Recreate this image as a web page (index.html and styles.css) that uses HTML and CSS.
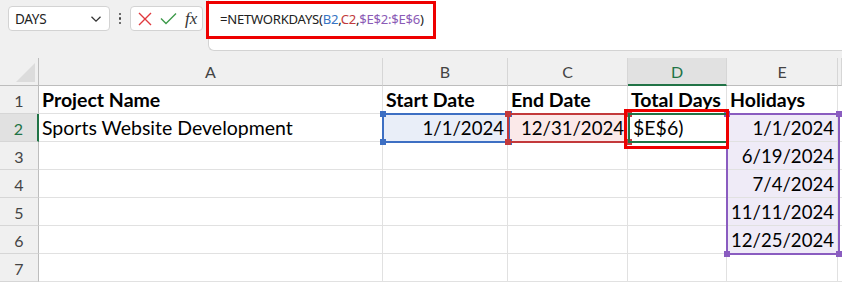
FILE: index.html
```html
<!DOCTYPE html>
<html>
<head>
<meta charset="utf-8">
<link rel="stylesheet" href="styles.css">
</head>
<body>
<div class="app">
  <div class="topbar">
    <div class="namebox">
      <span class="name">DAYS</span>
      <svg class="chev" width="12" height="8" viewBox="0 0 12 8"><path d="M1.5 1.8 L6 6.2 L10.5 1.8" fill="none" stroke="#333" stroke-width="1.3"/></svg>
    </div>
    <div class="dots"><i></i><i></i><i></i></div>
    <div class="btns">
      <svg width="14" height="14" viewBox="0 0 14 14"><path d="M1 1 L13 13 M13 1 L1 13" stroke="#e0393e" stroke-width="1.4" fill="none"/></svg>
      <svg width="17" height="13" viewBox="0 0 17 13"><path d="M1 6.5 L6 11.5 L16 1.5" stroke="#3e9a4b" stroke-width="1.4" fill="none"/></svg>
      <span class="fx">fx</span>
    </div>
    <div class="formula">
      <span class="ftext">=NETWORKDAYS(<span class="rb">B2</span>,<span class="rr">C2</span>,<span class="rp">$E$2:$E$6</span>)</span>
    </div>
    <div class="anno anno-formula"></div>
  </div>
  <div class="sheet">
    <div class="corner"><span class="tri"></span></div>
    <div class="ch">A</div>
    <div class="ch">B</div>
    <div class="ch">C</div>
    <div class="ch active">D</div>
    <div class="ch">E</div>
    <div class="ch"></div>

    <div class="rh">1</div>
    <div class="c b">Project Name</div>
    <div class="c b">Start Date</div>
    <div class="c b">End Date</div>
    <div class="c b">Total Days</div>
    <div class="c b">Holidays</div>
    <div class="c"></div>

    <div class="rh active">2</div>
    <div class="c">Sports Website Development</div>
    <div class="c r fill-b">1/1/2024</div>
    <div class="c r fill-r">12/31/2024</div>
    <div class="c edit">$E$6)</div>
    <div class="c r fill-p">1/1/2024</div>
    <div class="c"></div>

    <div class="rh">3</div>
    <div class="c"></div><div class="c"></div><div class="c"></div><div class="c"></div>
    <div class="c r fill-p">6/19/2024</div><div class="c"></div>

    <div class="rh">4</div>
    <div class="c"></div><div class="c"></div><div class="c"></div><div class="c"></div>
    <div class="c r fill-p">7/4/2024</div><div class="c"></div>

    <div class="rh">5</div>
    <div class="c"></div><div class="c"></div><div class="c"></div><div class="c"></div>
    <div class="c r fill-p">11/11/2024</div><div class="c"></div>

    <div class="rh">6</div>
    <div class="c"></div><div class="c"></div><div class="c"></div><div class="c"></div>
    <div class="c r fill-p">12/25/2024</div><div class="c"></div>

    <div class="rh">7</div>
    <div class="c"></div><div class="c"></div><div class="c"></div><div class="c"></div>
    <div class="c"></div><div class="c"></div>

    <div class="rng rng-b"><i class="h tl"></i><i class="h tr"></i><i class="h bl"></i><i class="h br"></i></div>
    <div class="rng rng-r"><i class="h tl"></i><i class="h tr"></i><i class="h bl"></i><i class="h br"></i></div>
    <div class="rng rng-p"><i class="h tl"></i><i class="h tr"></i><i class="h bl"></i><i class="h br"></i></div>
    <div class="rng rng-g"></div>
    <div class="anno anno-cell"></div>
  </div>
</div>
</body>
</html>
```

FILE: styles.css
```css
* { box-sizing: border-box; }
html, body { margin: 0; padding: 0; }
body { width: 842px; height: 284px; overflow: hidden; background: #fff; font-family: Lato, "Noto Sans", sans-serif; }
.app { width: 842px; height: 284px; }

.topbar {
  position: relative;
  height: 58px;
  background: #f0f0f0;
  display: flex;
  align-items: flex-start;
  padding: 6px 0 0 8px;
}
.namebox {
  width: 102px; height: 25px;
  background: #fff;
  border: 1px solid #d3d3d3;
  border-radius: 4px;
  display: flex; align-items: center; justify-content: space-between;
  padding: 0 7px 0 6px;
}
.name { font-family: "Noto Sans", sans-serif; font-size: 13.5px; color: #222; letter-spacing: -0.3px; }
.dots { width: 20px; height: 25px; display: flex; flex-direction: column; align-items: center; justify-content: center; gap: 2px; }
.dots i { display: block; width: 2.5px; height: 2.5px; background: #444; border-radius: 50%; }
.btns {
  width: 73px; height: 25px;
  background: #fff;
  border: 1px solid #d3d3d3;
  border-radius: 4px;
  display: flex; align-items: center; gap: 8px;
  padding: 0 0 0 7px;
}
.fx { font-family: "Liberation Serif", "DejaVu Serif", serif; font-style: italic; font-size: 17px; color: #333; }
.formula {
  position: absolute; left: 208px; top: -2px; right: 0; height: 53px;
  background: #fff;
  border-left: 1px solid #d3d3d3;
  border-bottom: 1px solid #d3d3d3;
  border-bottom-left-radius: 6px;
  padding: 10px 0 0 11px;
}
.ftext { font-family: "Noto Sans", sans-serif; font-size: 13.1px; color: #222; letter-spacing: -0.25px; }
.rb { color: #3774c3; }
.rr { color: #c23a3c; }
.rp { color: #8b5bb6; }

.anno { position: absolute; border: 3px solid #ee0000; }
.anno-formula { left: 206px; top: 1px; width: 230px; height: 38px; }
.anno-cell { left: 624px; top: 51px; width: 105px; height: 40px; }

.sheet {
  position: relative;
  display: grid;
  grid-template-columns: 39px 344px 125px 120px 99px 111px 4px;
  grid-template-rows: repeat(8, 28px);
}
.corner { background: #f0f0f0; border-right: 1px solid #bdbdbd; border-bottom: 1px solid #bdbdbd; position: relative; }
.tri { position: absolute; right: 3px; bottom: 3px; width: 0; height: 0; border-left: 19px solid transparent; border-bottom: 19px solid #dcdcdc; }
.ch {
  background: #f0f0f0;
  border-right: 1px solid #d6d6d6;
  border-bottom: 1px solid #bdbdbd;
  text-align: center;
  font-size: 16px; color: #444;
  line-height: 27px;
}
.ch.active { background: #e1e1e1; color: #217346; border-bottom: 2px solid #217346; }
.rh {
  background: #f0f0f0;
  border-right: 1px solid #bdbdbd;
  border-bottom: 1px solid #d6d6d6;
  text-align: center;
  font-size: 16px; color: #444;
  line-height: 29px;
}
.rh.active { background: #e1e1e1; color: #217346; border-right: 2px solid #217346; }
.c {
  border-right: 1px solid #e1e1e1;
  border-bottom: 1px solid #e1e1e1;
  font-size: 19.5px; color: #000;
  padding: 0 3px;
  line-height: 28px;
  white-space: nowrap;
  overflow: visible;
}
.c.b { font-weight: bold; }
.c.r { text-align: right; padding-right: 3px; font-size: 18.6px; }
.c.edit { padding-left: 5px; }
.fill-b { background: #e9eef8; }
.fill-r { background: #fbe9e9; }
.fill-p { background: #efebf7; }

.rng { position: absolute; border: 2px solid; pointer-events: none; }
.rng-b { left: 382px; top: 55px; width: 128px; height: 30px; border-color: #3d6fc3; }
.rng-r { left: 507px; top: 55px; width: 123px; height: 30px; border-color: #c3393b; }
.rng-p { left: 726px; top: 55px; width: 114px; height: 142px; border-color: #8a5cc0; }
.rng-g { left: 628px; top: 55px; width: 100px; height: 30px; border-color: #217346; }
.h { position: absolute; width: 6px; height: 6px; }
.rng-b .h { background: #3d6fc3; }
.rng-r .h { background: #c3393b; }
.rng-p .h { background: #8a5cc0; }
.tl { left: -4px; top: -4px; }
.tr { right: -4px; top: -4px; }
.bl { left: -4px; bottom: -4px; }
.br { right: -4px; bottom: -4px; }
```
